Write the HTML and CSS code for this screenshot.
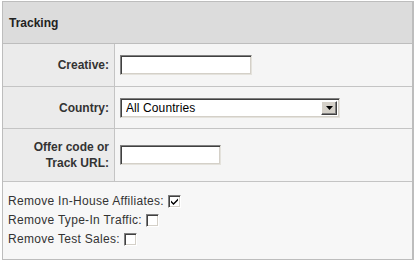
FILE: index.html
```html
<!DOCTYPE html>
<html lang="en">
<head>
  <meta charset="UTF-8" />
  <title>Tracking</title>
  <link rel="stylesheet" href="styles.css">
</head>
<body>
  <div class="panel">
    <div class="panel-head">Tracking</div>

    <div class="form-row row-creative">
      <label class="cell-label" for="creative">Creative:</label>
      <div class="cell-value">
        <input type="text" class="field field-creative" id="creative" />
      </div>
    </div>

    <div class="form-row row-country">
      <label class="cell-label" for="country">Country:</label>
      <div class="cell-value">
        <div class="select">
          <select id="country">
            <option>All Countries</option>
          </select>
          <span class="select-btn">
            <svg width="7" height="4" viewBox="0 0 7 4"><path d="M0 0h7L3.5 4z" fill="#000"/></svg>
          </span>
        </div>
      </div>
    </div>

    <div class="form-row row-offer">
      <label class="cell-label" for="offer">Offer code or<br>Track URL:</label>
      <div class="cell-value">
        <input type="text" class="field field-offer" id="offer" />
      </div>
    </div>

    <div class="options">
      <label class="opt">Remove In-House Affiliates:
        <span class="box">
          <svg width="7" height="7" viewBox="0 0 7 7"><path d="M0 2.5l2.5 2.5L7 0.5v2L2.5 7 0 4.5z" fill="#000"/></svg>
        </span>
      </label>
      <label class="opt">Remove Type-In Traffic: <span class="box"></span></label>
      <label class="opt">Remove Test Sales: <span class="box"></span></label>
    </div>
  </div>
</body>
</html>
```

FILE: styles.css
```css
body {
  margin: 0;
  padding: 1px 1px 0 2px;
  background-color: #fff;
  font-family: "Liberation Sans", Arial, sans-serif;
  font-size: 12px;
  color: #333;
}
.panel {
  width: 412px;
  height: 259px;
  box-sizing: border-box;
  border: 1px solid #bdbdbd;
  border-right-width: 2px;
  background-color: #f7f7f7;
}
.panel-head {
  height: 41px;
  line-height: 42px;
  padding-left: 6px;
  background-color: #dcdcdc;
  border-bottom: 1px solid #bdbdbd;
  font-weight: bold;
  color: #222;
}
.form-row {
  display: grid;
  grid-template-columns: 112px 1fr;
  border-bottom: 1px solid #c4c4c4;
}
.row-creative { height: 42px; }
.row-country { height: 41px; }
.row-offer { height: 52px; }
.cell-label {
  display: flex;
  align-items: center;
  justify-content: flex-end;
  text-align: right;
  padding-right: 5px;
  background-color: #ebebeb;
  border-right: 1px solid #c4c4c4;
  font-weight: bold;
  line-height: 16px;
}
.cell-value {
  display: flex;
  align-items: center;
  padding-left: 5px;
  background-color: #f5f5f5;
}
.field {
  height: 20px;
  box-sizing: border-box;
  margin: 0;
  padding: 1px 3px;
  border: 1px solid;
  border-color: #808080 #e4e2dc #e4e2dc #808080;
  box-shadow: inset 1px 1px 0 #404040, inset -1px -1px 0 #d4d0c8;
  background-color: #fff;
  font: inherit;
}
.field-creative { width: 132px; }
.field-offer { width: 101px; }
.select {
  display: flex;
  width: 220px;
  height: 20px;
  box-sizing: border-box;
  padding: 2px;
  border: 1px solid;
  border-color: #808080 #e4e2dc #e4e2dc #808080;
  box-shadow: inset 1px 1px 0 #404040, inset -1px -1px 0 #d4d0c8;
  background-color: #fff;
}
.select select {
  flex: 1;
  appearance: none;
  border: none;
  outline: none;
  background: transparent;
  padding: 0 0 0 3px;
  margin: 0;
  font: 12px "Liberation Sans", Arial, sans-serif;
  letter-spacing: 0.1px;
  color: #000;
}
.select-btn {
  display: flex;
  align-items: center;
  justify-content: center;
  width: 16px;
  box-sizing: border-box;
  background-color: #d4d0c8;
  border: 1px solid;
  border-color: #fff #404040 #404040 #fff;
  box-shadow: inset -1px -1px 0 #808080;
}
.options {
  display: flex;
  flex-direction: column;
  padding: 10px 0 0 5px;
  line-height: 19px;
}
.opt {
  display: flex;
  align-items: center;
  gap: 4px;
  letter-spacing: 0.3px;
}
.box {
  display: flex;
  align-items: center;
  justify-content: center;
  width: 13px;
  height: 13px;
  box-sizing: border-box;
  border: 1px solid;
  border-color: #808080 #fff #fff #808080;
  box-shadow: inset 1px 1px 0 #404040, inset -1px -1px 0 #d4d0c8;
  background-color: #fff;
}
```
